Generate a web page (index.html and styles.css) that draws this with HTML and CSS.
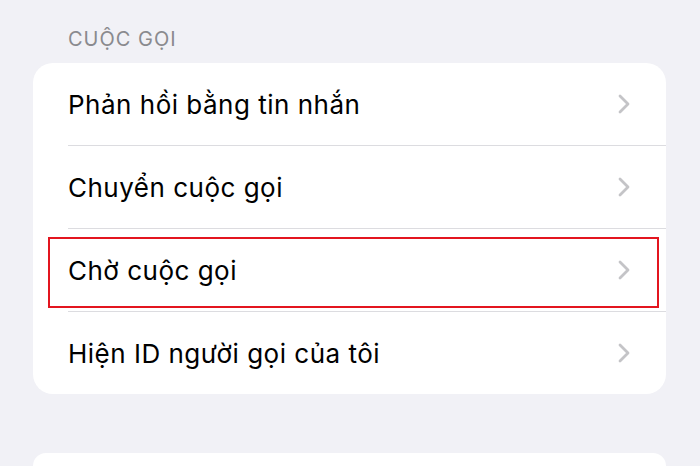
FILE: index.html
```html
<!DOCTYPE html>
<html lang="vi">
<head>
<meta charset="utf-8">
<link rel="stylesheet" href="styles.css">
</head>
<body>
<div class="page">
  <div class="section-title">CUỘC GỌI</div>
  <div class="card">
    <div class="row"><div class="row-inner"><span class="label">Phản hồi bằng tin nhắn</span><svg class="chev" viewBox="0 0 14 22"><path d="M3 3 L11 11 L3 19"/></svg></div></div>
    <div class="row"><div class="row-inner"><span class="label">Chuyển cuộc gọi</span><svg class="chev" viewBox="0 0 14 22"><path d="M3 3 L11 11 L3 19"/></svg></div></div>
    <div class="row highlighted"><div class="row-inner"><span class="label">Chờ cuộc gọi</span><svg class="chev" viewBox="0 0 14 22"><path d="M3 3 L11 11 L3 19"/></svg></div><div class="mark"></div></div>
    <div class="row last"><div class="row-inner"><span class="label">Hiện ID người gọi của tôi</span><svg class="chev" viewBox="0 0 14 22"><path d="M3 3 L11 11 L3 19"/></svg></div></div>
  </div>
  <div class="card card-next"></div>
</div>
</body>
</html>
```
FILE: styles.css
```css
html, body {
  margin: 0;
  padding: 0;
  background: #f1f1f6;
  height: 466px;
  overflow: hidden;
}
.page {
  padding: 0 34px 0 33px;
  font-family: Inter, "Noto Sans", sans-serif;
}
.section-title {
  font-size: 20px;
  line-height: 24px;
  color: #8a8a8e;
  padding: 27px 0 12px 35px;
  letter-spacing: 1px;
}
.card {
  background: #ffffff;
  border-radius: 20px;
  overflow: hidden;
}
.row {
  position: relative;
  padding-left: 35px;
}
.row-inner {
  height: 82px;
  display: flex;
  align-items: center;
  justify-content: space-between;
  padding-right: 35px;
  border-bottom: 1px solid #dcdce0;
}
.row.last .row-inner {
  border-bottom: none;
}
.label {
  font-size: 26px;
  color: #000;
  letter-spacing: 0.5px;
}
.chev {
  width: 14px;
  height: 22px;
  fill: none;
  stroke: #c4c4c7;
  stroke-width: 2.8;
  stroke-linecap: round;
  stroke-linejoin: round;
}
.mark {
  position: absolute;
  top: 8px;
  left: 15px;
  right: 7px;
  bottom: 4px;
  border: 2.5px solid #e3151f;
  pointer-events: none;
}
.card-next {
  margin-top: 59px;
  height: 13px;
  border-radius: 20px 20px 0 0;
}
```
